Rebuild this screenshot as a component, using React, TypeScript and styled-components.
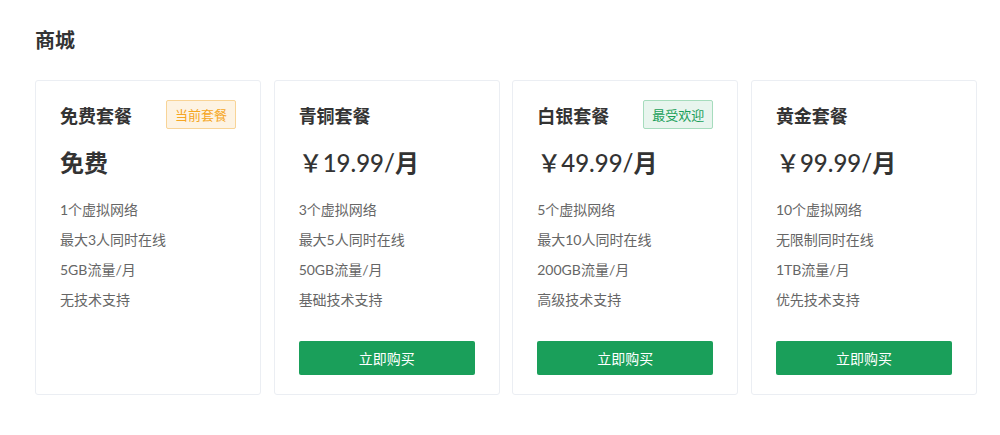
import React from "react";
import styled, { createGlobalStyle } from "styled-components";

const Global = createGlobalStyle`
  html, body { margin: 0; padding: 0; background: #ffffff; }
  body { font-family: Lato, "Noto Sans CJK SC", sans-serif; color: #333; }
`;

const Page = styled.div`
  padding: 26px 23px 0 35px;
`;

const Title = styled.h1`
  margin: 0;
  font-size: 20px;
  line-height: 28px;
  font-weight: 700;
  color: #333;
`;

const Grid = styled.div`
  display: grid;
  grid-template-columns: repeat(4, 1fr);
  gap: 12.5px;
  margin-top: 26px;
`;

const Card = styled.div`
  border: 1px solid #ebeef3;
  border-radius: 3px;
  padding: 19px 24px 19px 24px;
  display: flex;
  flex-direction: column;
  background: #fff;
  min-height: 275px;
`;

const Header = styled.div`
  display: flex;
  align-items: center;
  justify-content: space-between;
  height: 29px;
`;

const Name = styled.div`
  font-size: 18px;
  font-weight: 700;
  color: #333;
`;

const Badge = styled.span<{ $tone: "orange" | "green" }>`
  display: inline-flex;
  align-items: center;
  height: 29px;
  box-sizing: border-box;
  padding: 0 8px;
  font-size: 13px;
  border-radius: 2px;
  color: ${(p) => (p.$tone === "orange" ? "#f5a623" : "#1a9f5a")};
  background: ${(p) => (p.$tone === "orange" ? "#fdf3e3" : "#e8f5ee")};
  border: 1px solid ${(p) => (p.$tone === "orange" ? "#f8d497" : "#a6dcbd")};
`;

const Price = styled.div`
  margin-top: 18px;
  font-size: 24px;
  line-height: 32px;
  font-weight: 500;
  color: #333;
`;

const Unit = styled.span`
  font-weight: 700;
`;

const Features = styled.ul`
  list-style: none;
  margin: 16px 0 0;
  padding: 0;
`;

const Feature = styled.li`
  font-size: 14px;
  line-height: 30px;
  color: #666;
`;

const BuyButton = styled.button`
  margin-top: auto;
  height: 34px;
  border: none;
  border-radius: 2px;
  background: #1a9f5a;
  color: #fff;
  font-family: Lato, "Noto Sans CJK SC", sans-serif;
  font-size: 14px;
  cursor: pointer;
`;

const Spacer = styled.div`
  height: 26px;
`;

type Plan = {
  name: string;
  badge?: { text: string; tone: "orange" | "green" };
  price?: string;
  features: string[];
  buy: boolean;
};

const plans: Plan[] = [
  {
    name: "免费套餐",
    badge: { text: "当前套餐", tone: "orange" },
    features: ["1个虚拟网络", "最大3人同时在线", "5GB流量/月", "无技术支持"],
    buy: false,
  },
  {
    name: "青铜套餐",
    price: "19.99",
    features: ["3个虚拟网络", "最大5人同时在线", "50GB流量/月", "基础技术支持"],
    buy: true,
  },
  {
    name: "白银套餐",
    badge: { text: "最受欢迎", tone: "green" },
    price: "49.99",
    features: ["5个虚拟网络", "最大10人同时在线", "200GB流量/月", "高级技术支持"],
    buy: true,
  },
  {
    name: "黄金套餐",
    price: "99.99",
    features: ["10个虚拟网络", "无限制同时在线", "1TB流量/月", "优先技术支持"],
    buy: true,
  },
];

export default function App() {
  return (
    <>
      <Global />
      <Page>
        <Title>商城</Title>
        <Grid>
          {plans.map((p) => (
            <Card key={p.name}>
              <Header>
                <Name>{p.name}</Name>
                {p.badge && <Badge $tone={p.badge.tone}>{p.badge.text}</Badge>}
              </Header>
              <Price>
                {p.price ? (
                  <>
                    ￥{p.price}/<Unit>月</Unit>
                  </>
                ) : (
                  <Unit>免费</Unit>
                )}
              </Price>
              <Features>
                {p.features.map((f) => (
                  <Feature key={f}>{f}</Feature>
                ))}
              </Features>
              {p.buy && (
                <>
                  <Spacer />
                  <BuyButton>立即购买</BuyButton>
                </>
              )}
            </Card>
          ))}
        </Grid>
      </Page>
    </>
  );
}
